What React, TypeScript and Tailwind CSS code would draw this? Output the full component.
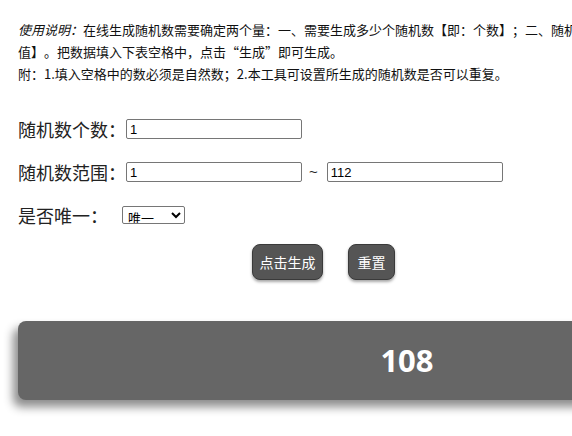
import React, { useState } from 'react';

const cjk = "font-['Microsoft_YaHei','Noto_Sans_CJK_SC',sans-serif]";

const App: React.FC = () => {
  const [count, setCount] = useState('1');
  const [min, setMin] = useState('1');
  const [max, setMax] = useState('112');
  const [unique, setUnique] = useState('1');
  const [result, setResult] = useState('108');

  // 生成随机数
  const handleGenerate = () => {
    const n = parseInt(count) || 1;
    const lo = parseInt(min) || 0;
    const hi = parseInt(max) || 0;
    const out: number[] = [];
    for (let i = 0; i < n && i < 1000; i++) {
      let v = lo + Math.floor(Math.random() * (hi - lo + 1));
      if (unique === '1' && out.includes(v) && hi - lo + 1 > out.length) {
        i--;
        continue;
      }
      out.push(v);
    }
    setResult(out.join(', '));
  };

  const handleReset = () => {
    setCount('1');
    setMin('1');
    setMax('112');
    setResult('');
  };

  const inputCls =
    "w-[176px] h-[20px] border border-[#767676] rounded-[2px] px-[3px] text-[13px] text-black font-['Liberation_Sans',Arial,sans-serif] bg-white outline-none";

  return (
    <div className={`w-[800px] min-h-[436px] bg-white pl-[18px] pt-[19px] text-black [text-spacing-trim:space-all] ${cjk}`}>
      {/* 说明 */}
      <div className="text-[13px] leading-[22px] text-[#111] whitespace-nowrap">
        <p>
          <i>使用说明：</i>在线生成随机数需要确定两个量：一、需要生成多少个随机数【即：个数】；二、随机数的范围【即：最小值和最大
          <br />
          值】。把数据填入下表空格中，点击“生成”即可生成。
        </p>
        <p>附：1.填入空格中的数必须是自然数；2.本工具可设置所生成的随机数是否可以重复。</p>
      </div>

      {/* 表单 */}
      <div className="mt-[32px] flex flex-col gap-[19px] text-[18px] text-[#222]">
        <div className="flex items-center h-[24px]">
          <span className="w-[108px]">随机数个数：</span>
          <input className={inputCls} value={count} onChange={e => setCount(e.target.value)} />
        </div>
        <div className="flex items-center h-[24px]">
          <span className="w-[108px]">随机数范围：</span>
          <input className={inputCls} value={min} onChange={e => setMin(e.target.value)} />
          <span className="ml-[7px] mr-[9px] text-[15px] font-['Liberation_Sans',Arial,sans-serif]">~</span>
          <input className={inputCls} value={max} onChange={e => setMax(e.target.value)} />
        </div>
        <div className="flex items-center h-[24px]">
          <span className="w-[104px]">是否唯一：</span>
          <select
            value={unique}
            onChange={e => setUnique(e.target.value)}
            className="w-[63px] h-[18px] border border-[#767676] rounded-[2px] text-[13px] bg-white text-black pl-[1px]"
          >
            <option value="1">唯一</option>
            <option value="0">不唯一</option>
          </select>
        </div>
      </div>

      {/* 按钮 */}
      <div className="mt-[17px] pl-[234px] flex gap-[25px]">
        <button
          onClick={handleGenerate}
          className="h-[36px] w-[71px] rounded-[8px] bg-[#555] border border-[#3a3a3a] text-white text-[14px] shadow-[0_2px_3px_rgba(0,0,0,0.35)]"
        >
          点击生成
        </button>
        <button
          onClick={handleReset}
          className="h-[36px] w-[47px] rounded-[8px] bg-[#555] border border-[#3a3a3a] text-white text-[14px] shadow-[0_2px_3px_rgba(0,0,0,0.35)]"
        >
          重置
        </button>
      </div>

      {/* 结果 */}
      <div className="mt-[41px] w-[778px] h-[79px] rounded-[8px] bg-[#666] shadow-[-5px_7px_10px_rgba(0,0,0,0.45)] flex items-center justify-center">
        <span className="text-white text-[31px] font-bold font-['Noto_Sans','Noto_Sans_CJK_SC',sans-serif]">{result}</span>
      </div>
    </div>
  );
};

export default App;
